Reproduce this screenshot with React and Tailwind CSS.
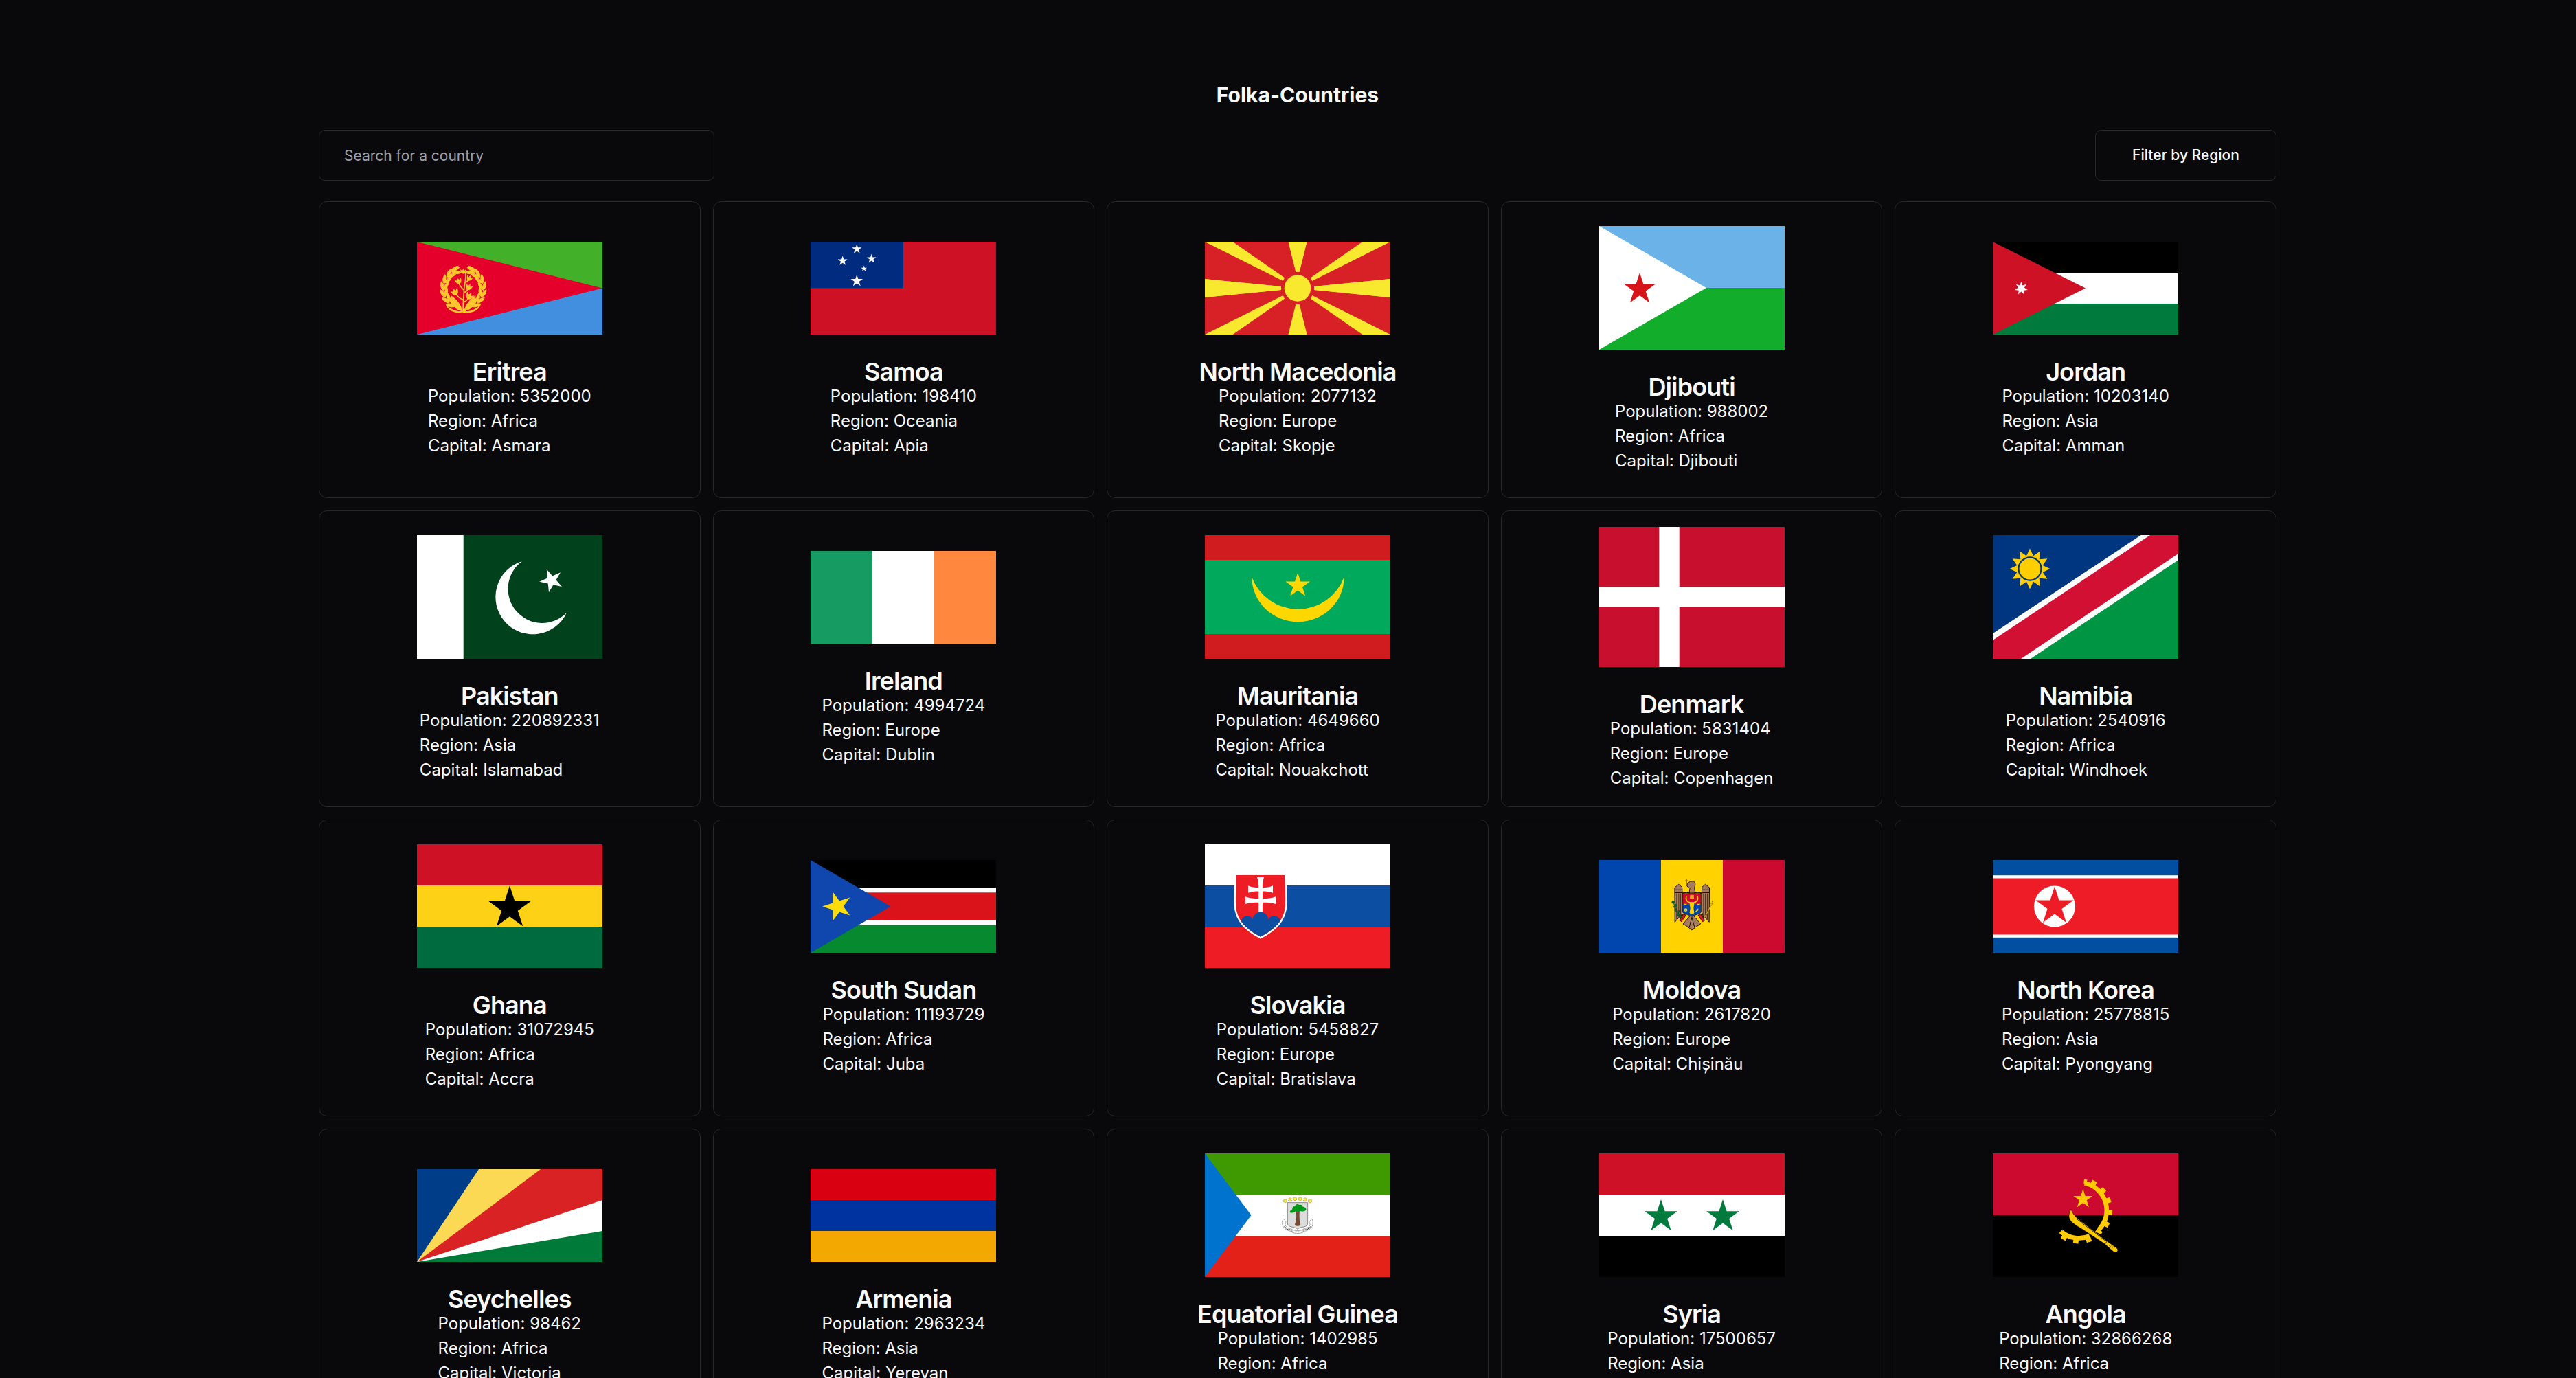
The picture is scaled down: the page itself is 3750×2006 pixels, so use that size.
import React from "react";

const starPoints = (cx, cy, r, rot = 0, n = 5, inner = 0.382) =>
  Array.from({ length: n * 2 }, (_, i) => {
    const a = ((-90 + rot + (i * 180) / n) * Math.PI) / 180;
    const d = i % 2 ? r * inner : r;
    return `${(cx + d * Math.cos(a)).toFixed(2)},${(cy + d * Math.sin(a)).toFixed(2)}`;
  }).join(" ");

const Star = ({ x, y, r, rot, n, inner, fill }) => (
  <polygon points={starPoints(x, y, r, rot, n, inner)} fill={fill} />
);

const Bands = ({ rows }) =>
  rows.map(([y, h, fill], i) => <rect key={i} y={y} width="270" height={h} fill={fill} />);

const Pillars = ({ fills, h }) =>
  fills.map((fill, i) => <rect key={i} x={i * 90} width="90" height={h} fill={fill} />);

const LEAF = "M0 7 C-4.6 3.5 -5 -2.5 -1.2 -7.5 C3.2 -4 4.2 2 0 7 Z";
const SPRIG = "M0 5 C-4 4 -5.5 0 -5.5 -4 L-2 -1.5 L0 -5.5 L2 -1.5 L5.5 -4 C5.5 0 4 4 0 5 Z";

function Eritrea() {
  const angles = [24, 44, 64, 84, 104, 124, 143];
  return (
    <>
      <rect width="270" height="67.5" fill="#43b02a" />
      <rect y="67.5" width="270" height="67.5" fill="#418fde" />
      <path d="M0 0 L270 67.5 L0 135 Z" fill="#e4002b" />
      <g transform="translate(67.4 68)" fill="#ffc72c">
        {[1, -1].map((s) => (
          <g key={s} transform={`scale(${s} 1)`}>
            {angles.map((a) => (
              <g key={a} transform={`rotate(${a}) translate(0 -28.5) rotate(-90)`}>
                <path d={LEAF} transform="translate(2.6 0) rotate(22) scale(.8 1)" />
                <path d={LEAF} transform="translate(-2.6 -1) rotate(-22) scale(.8 1)" />
              </g>
            ))}
            <path d="M5 -31 C9 -33 15 -31 19 -27 C14 -24 8 -26 5 -31 Z" />
            <path d="M1 32 C4 22 10 15 18 10 C18 20 14 29 6 32 Z" />
            <path d="M1 33 C12 34 20 29 26 22 C23 32 12 37 1 35 Z" />
            <path d="M0 31 L7 35 M0 34 L7 30" stroke="#ffc72c" strokeWidth="1.4" fill="none" />
          </g>
        ))}
        <path d="M0 35 C-1 22 1 12 1 3 C1 -6 5 -12 3 -24 M0 16 C-4 15 -9 12 -11 6 M1 2 C-2 0 -5 -4 -7 -9 M1 20 C5 18 7 15 9 13 M1 6 C4 5 6 2 7 0 M3 -9 C6 -10 8 -13 9 -15" stroke="#ffc72c" strokeWidth="1.7" fill="none" />
        <path d={SPRIG} transform="translate(0 -25) scale(.75)" />
        <path d={SPRIG} transform="translate(9 -15) rotate(20) scale(.8)" />
        <path d={SPRIG} transform="translate(-7 -11) rotate(-25) scale(.9)" />
        <path d={SPRIG} transform="translate(8 -2) rotate(25) scale(.9)" />
        <path d={SPRIG} transform="translate(-12 5) rotate(-30)" />
        <path d={SPRIG} transform="translate(9 11) rotate(30) scale(1.05)" />
      </g>
    </>
  );
}

const Samoa = () => (
  <>
    <rect width="270" height="135" fill="#ce1124" />
    <rect width="135" height="67.3" fill="#002b7f" />
    <Star x={67.3} y={10.6} r={7.4} fill="#fff" />
    <Star x={46.7} y={27.8} r={7.4} fill="#fff" />
    <Star x={88.7} y={24.8} r={7.1} fill="#fff" />
    <Star x={77.7} y={39.1} r={4.6} fill="#fff" />
    <Star x={67.3} y={56.9} r={9.2} fill="#fff" />
  </>
);

const NorthMacedonia = () => (
  <>
    <rect width="270" height="135" fill="#d82126" />
    <g fill="#f8e92e">
      {[
        [1, 1],
        [-1, 1],
        [1, -1],
        [-1, -1],
      ].map(([sx, sy]) => (
        <g key={`${sx}${sy}`} transform={`translate(135 67.5) scale(${sx} ${sy})`}>
          <path d="M-135 -67.5 H-94.4 L-19 -15.3 L-21.2 -10.4 Z" />
          <path d="M-13.4 -67.5 H13.4 L2.6 -23.8 H-2.6 Z" />
          <path d="M-135 -13.4 V13.4 L-24 2.5 V-2.5 Z" />
        </g>
      ))}
      <circle cx="135" cy="67.5" r="19.3" />
    </g>
  </>
);

const Djibouti = () => (
  <>
    <Bands rows={[[0, 90, "#6ab2e7"], [90, 90, "#12ad2b"]]} />
    <path d="M0 0 L156 90 L0 180 Z" fill="#fff" />
    <Star x={59} y={92} r={24} fill="#d7141a" />
  </>
);

const Jordan = () => (
  <>
    <Bands rows={[[0, 45, "#000"], [45, 45, "#fff"], [90, 45, "#007a3d"]]} />
    <path d="M0 0 L135 67.5 L0 135 Z" fill="#ce1124" />
    <Star x={41.4} y={67.8} r={9.7} n={7} inner={0.48} fill="#fff" />
  </>
);

const Pakistan = () => (
  <>
    <rect width="270" height="180" fill="#01411c" />
    <rect width="67.7" height="180" fill="#fff" />
    <path d="M153 38 A54.3 54.3 0 1 0 218 112.7 A49.7 49.7 0 1 1 153 38 Z" fill="#fff" />
    <Star x={195.8} y={66} r={17.6} rot={-23.5} fill="#fff" />
  </>
);

const Ireland = () => <Pillars fills={["#169b62", "#fff", "#ff883e"]} h={135} />;

const Mauritania = () => (
  <>
    <Bands rows={[[0, 36, "#d01c1f"], [36, 108, "#00a95c"], [144, 36, "#d01c1f"]]} />
    <path d="M68.3 61 A67.2 65.3 0 0 0 202.7 61 A71.7 71.7 0 0 1 68.3 61 Z" fill="#ffd700" />
    <Star x={135.2} y={73.4} r={18.7} fill="#ffd700" />
  </>
);

const Denmark = () => (
  <>
    <rect width="270" height="204" fill="#c8102e" />
    <rect x="87.3" width="29.4" height="204" fill="#fff" />
    <rect y="87.3" width="270" height="29.4" fill="#fff" />
  </>
);

const Namibia = () => (
  <>
    <rect width="270" height="180" fill="#fff" />
    <path d="M0 0 H215.7 L0 143.3 Z" fill="#003580" />
    <path d="M0 153 L229 0 H270 V27 L41 180 H0 Z" fill="#d21034" />
    <path d="M270 36.3 V180 H55 Z" fill="#009543" />
    <Star x={54} y={49} r={29.4} n={12} inner={0.66} fill="#ffce00" />
    <circle cx="54" cy="49" r="17.7" fill="#003580" />
    <circle cx="54" cy="49" r="15.4" fill="#ffce00" />
  </>
);

const Ghana = () => (
  <>
    <Bands rows={[[0, 60, "#ce1124"], [60, 60, "#fcd116"], [120, 60, "#006b3f"]]} />
    <Star x={135} y={92.8} r={32.6} fill="#000" />
  </>
);

const SouthSudan = () => (
  <>
    <Bands
      rows={[
        [0, 40.2, "#000"],
        [40.2, 54.6, "#fff"],
        [47.3, 40.2, "#da121a"],
        [94.7, 40.3, "#078930"],
      ]}
    />
    <path d="M0 0 L116.6 67.5 L0 135 Z" fill="#0f47af" />
    <Star x={39.3} y={67.5} r={22.2} rot={-90} fill="#fcdd09" />
  </>
);

const Slovakia = () => (
  <>
    <Bands rows={[[0, 60, "#fff"], [60, 60, "#0b4ea2"], [120, 60, "#ee1c25"]]} />
    <path
      id="sk-shield"
      d="M46 45 H116 C117 60 117.3 75 117 88 C116 112 100 124.5 81 134.8 C62 124.5 46 112 45 88 C44.7 75 45 60 46 45 Z"
      fill="#ee1c25"
      stroke="#fff"
      strokeWidth="5.2"
    />
    <clipPath id="sk-clip">
      <path d="M46 45 H116 C117 60 117.3 75 117 88 C116 112 100 124.5 81 134.8 C62 124.5 46 112 45 88 C44.7 75 45 60 46 45 Z" />
    </clipPath>
    <g clipPath="url(#sk-clip)">
      <rect x="40" y="40" width="82" height="100" fill="#ee1c25" />
      <path
        d="M76 48 H86 C84.6 53 84 57 84 63.2 C89 63.2 94 62.5 99 60.3 V70.7 C94 69 89 68.5 84 68.5 V79.3 C91 79.3 97 78.6 103 76.3 V87 C97 85.2 91 84.8 84 84.8 V101 H78.3 V84.8 C71 84.8 65 85.2 59 87 V76.3 C65 78.6 71 79.3 78.3 79.3 V68.5 C73 68.5 68 69 63 70.7 V60.3 C68 62.5 73 63.2 78.3 63.2 C78.3 57 77.6 53 76 48 Z"
        fill="#fff"
      />
      <g fill="#0b4ea2">
        <circle cx="81" cy="110" r="11.3" />
        <circle cx="61.7" cy="113" r="9" />
        <circle cx="100.7" cy="113" r="9" />
        <path d="M50 114 L70.8 110 H92 L113 114 V140 H50 Z" />
      </g>
    </g>
  </>
);

const Moldova = () => (
  <>
    <Pillars fills={["#0046ae", "#ffd200", "#cc092f"]} h={135} />
    <g transform="translate(-28 -22) scale(.33333)" strokeLinejoin="round">
      <g fill="#a77b5b" stroke="#1a120c" strokeWidth="3">
        <path d="M489 300 L474 318 L450 345 L462 352 L474 360 L489 372 L504 360 L516 352 L527 345 L504 318 Z" />
        <path d="M489 316 L478 358 M489 316 L500 358" />
        <path d="M477 210 L480 190 C474 184 466 182 467 176 C470 165 478 159 489 159 C500 158 505 165 503 174 L500 190 L504 210 Z" />
        {[1, -1].map((s) => (
          <g key={s} transform={`translate(489.5 0) scale(${s} 1)`}>
            <path d="M-76 186 L-58 172 L-44 184 L-42 212 L-42 292 L-50 318 L-60 320 L-75 337 Z" />
            <path d="M-76 196 L-42 196 M-76 208 L-40 208" strokeWidth="4" />
            <path d="M-67 212 V325 M-58 212 V318 M-50 212 V312" strokeWidth="2" />
            <path d="M-42 212 C-30 204 -20 206 -10 210" fill="none" strokeWidth="5" />
            <path d="M-32 302 L-50 334" stroke="#1a120c" strokeWidth="15" />
            <path d="M-33 305 L-49 332" stroke="#d4142b" strokeWidth="10" />
          </g>
        ))}
      </g>
      <path d="M459 156 H474 M466 149 V176" stroke="#8a6a10" strokeWidth="3" fill="none" />
      <path d="M449 212 H529 V260 H449 Z" fill="#cc092f" />
      <path d="M449 259 H529 V294 C520 304 500 306 489 313 C478 306 458 304 449 294 Z" fill="#0046ae" />
      <path d="M449 212 H529 V294 C520 304 500 306 489 313 C478 306 458 304 449 294 Z" fill="none" stroke="#1a120c" strokeWidth="2" />
      <path d="M466 222 C458 240 470 252 484 252 M512 222 C520 240 508 252 494 252" stroke="#ffd200" strokeWidth="5" fill="none" />
      <path d="M478 250 H500 L496 276 L499 296 C496 304 482 304 479 296 L482 276 Z" fill="#ffd200" />
      <rect x="482" y="220" width="14" height="14" fill="#e8a31a" stroke="#ffd200" strokeWidth="2" />
      <g fill="#ffd200">
        <path d="M453 257 H468 L461 264 Z M510 257 H526 L518 264 Z" />
        <circle cx="462" cy="284" r="7" />
        <path d="M504 292 C514 292 520 284 516 276 C512 284 506 286 504 292 Z" />
      </g>
      <circle cx="462" cy="284" r="2.4" fill="#0046ae" />
      <path d="M404 246 C412 262 424 290 440 318" stroke="#12602c" strokeWidth="3" fill="none" />
      <g fill="#12602c" stroke="#0c2c16" strokeWidth="1">
        <circle cx="407" cy="250" r="6" />
        <circle cx="419" cy="264" r="6" />
        <circle cx="412" cy="270" r="4" />
        <circle cx="420" cy="284" r="6" />
        <circle cx="432" cy="290" r="5" />
        <circle cx="428" cy="304" r="6" />
        <circle cx="439" cy="313" r="6" />
      </g>
      <path d="M580 246 C572 264 560 290 544 316" stroke="#6e5410" strokeWidth="6" strokeDasharray="6 3" fill="none" />
      <path d="M580 246 C572 264 560 290 544 316" stroke="#f2c21a" strokeWidth="3" fill="none" />
      <path d="M443 342 L458 320 M536 342 L520 320" stroke="#ffd200" strokeWidth="4" />
    </g>
  </>
);

const NorthKorea = () => (
  <>
    <rect width="270" height="135" fill="#024fa2" />
    <rect y="22.2" width="270" height="90.6" fill="#fff" />
    <rect y="26.5" width="270" height="82" fill="#ed1c27" />
    <circle cx="90" cy="67.5" r="30" fill="#fff" />
    <Star x={90} y={67.5} r={28.9} fill="#ed1c27" />
  </>
);

const Seychelles = () => (
  <>
    <rect width="270" height="135" fill="#003d88" />
    <path d="M0 135 L90 0 H270 V135 Z" fill="#fcd955" />
    <path d="M0 135 L180 0 H270 V135 Z" fill="#d92223" />
    <path d="M0 135 L270 45 V135 Z" fill="#fff" />
    <path d="M0 135 L270 90 V135 Z" fill="#007a39" />
  </>
);

const Armenia = () => (
  <Bands rows={[[0, 45, "#d90012"], [45, 45, "#0033a0"], [90, 45, "#f2a800"]]} />
);

const EquatorialGuinea = () => (
  <>
    <Bands rows={[[0, 60, "#3e9a00"], [60, 60, "#fff"], [120, 60, "#e32118"]]} />
    <path d="M0 0 L67.5 90 L0 180 Z" fill="#0073ce" />
    <g transform="translate(-34 -19) scale(.33333)">
      {[
        [453, 265],
        [474, 259],
        [495, 256],
        [518, 256],
        [540, 259],
        [561, 265],
      ].map(([x, y]) => (
        <polygon key={x} points={starPoints(x, y, 9, 0, 6, 0.62)} fill="#ffee33" stroke="#8a8320" strokeWidth="1.4" />
      ))}
      <path d="M463 272 H551 V362 C551 384 520 374 507 388 C494 374 463 384 463 362 Z" fill="#dcdcdc" stroke="#8b8b8b" strokeWidth="3" />
      <path d="M500 308 H515 C513 330 514 352 519 370 C512 375 502 375 495 370 C502 352 503 330 500 308 Z" fill="#7a4a30" stroke="#3b2418" strokeWidth="1" />
      <path d="M472 314 C474 306 482 304 484 300 C482 294 488 288 494 289 C496 280 508 276 514 282 C522 280 530 284 530 290 C540 290 546 298 544 304 C538 312 526 312 518 308 C510 312 502 308 496 311 C490 318 478 318 472 314 Z" fill="#009a1a" />
      <g fill="#fff" stroke="#777" strokeWidth="2">
        <path d="M446 342 L440 352 L441 370 C448 388 464 396 484 398 L483 388 C468 386 458 380 452 370 L456 356 Z" />
        <path d="M568 342 L574 352 L573 370 C566 388 550 396 530 398 L531 388 C546 386 556 380 562 370 L558 356 Z" />
        <path d="M483 390 C492 396 522 396 531 390 V402 C520 408 494 408 483 402 Z" />
      </g>
      <path d="M449 376 C456 386 466 390 481 392 M565 376 C558 386 548 390 533 392 M497 400 H517" stroke="#333" strokeWidth="4" strokeDasharray="3 1.5" fill="none" />
    </g>
  </>
);

const Syria = () => (
  <>
    <Bands rows={[[0, 60, "#ce1126"], [60, 60, "#fff"], [120, 60, "#000"]]} />
    <Star x={90} y={92} r={25} fill="#007a3d" />
    <Star x={180} y={92} r={25} fill="#007a3d" />
  </>
);

const Angola = () => (
  <>
    <Bands rows={[[0, 90, "#cc092f"], [90, 90, "#000"]]} />
    <g transform="translate(-41 -19) scale(.33333)" fill="#ffcb00">
      <path d="M524 187 A121 121 0 0 1 586 390 M546 418 A121 121 0 0 1 423 400" fill="none" stroke="#ffcb00" strokeWidth="20" />
      {[-62, -40, -19, 4, 27, 72, 96, 119].map((a) => (
        <rect key={a} x="126" y="-11.5" width="19" height="23" transform={`translate(500 306) rotate(${a})`} />
      ))}
      <path d="M522 170 L536 172 L531 190 L520 188 Z M413 405 L424 392 L436 401 L424 414 Z" />
      <path d="M580 385 L602 400 L596 412 L570 398 Z" />
      <Star x={517} y={256.5} r={44} fill="#ffcb00" />
      <path d="M465 302 C458 312 455 324 456 334 C457 352 478 366 496 377 C540 404 580 432 612 452 L650 486 C656 492 667 490 669 480 C668 474 664 470 658 466 L622 441 L496 344 C482 332 470 318 465 302 Z" stroke="#000" strokeWidth="1.5" />
      <path d="M490 344 L618 441 M622 440 L612 455" stroke="#000" strokeWidth="2.4" fill="none" />
      <path d="M634 455 L655 469 M631 459 L650 473" stroke="#000" strokeWidth="2.5" strokeDasharray="3 5" fill="none" />
    </g>
  </>
);

const COUNTRIES = [
  { name: "Eritrea", population: 5352000, region: "Africa", capital: "Asmara", Art: Eritrea, h: 135 },
  { name: "Samoa", population: 198410, region: "Oceania", capital: "Apia", Art: Samoa, h: 135 },
  { name: "North Macedonia", population: 2077132, region: "Europe", capital: "Skopje", Art: NorthMacedonia, h: 135 },
  { name: "Djibouti", population: 988002, region: "Africa", capital: "Djibouti", Art: Djibouti, h: 180 },
  { name: "Jordan", population: 10203140, region: "Asia", capital: "Amman", Art: Jordan, h: 135 },
  { name: "Pakistan", population: 220892331, region: "Asia", capital: "Islamabad", Art: Pakistan, h: 180 },
  { name: "Ireland", population: 4994724, region: "Europe", capital: "Dublin", Art: Ireland, h: 135 },
  { name: "Mauritania", population: 4649660, region: "Africa", capital: "Nouakchott", Art: Mauritania, h: 180 },
  { name: "Denmark", population: 5831404, region: "Europe", capital: "Copenhagen", Art: Denmark, h: 204 },
  { name: "Namibia", population: 2540916, region: "Africa", capital: "Windhoek", Art: Namibia, h: 180 },
  { name: "Ghana", population: 31072945, region: "Africa", capital: "Accra", Art: Ghana, h: 180 },
  { name: "South Sudan", population: 11193729, region: "Africa", capital: "Juba", Art: SouthSudan, h: 135 },
  { name: "Slovakia", population: 5458827, region: "Europe", capital: "Bratislava", Art: Slovakia, h: 180 },
  { name: "Moldova", population: 2617820, region: "Europe", capital: "Chișinău", Art: Moldova, h: 135 },
  { name: "North Korea", population: 25778815, region: "Asia", capital: "Pyongyang", Art: NorthKorea, h: 135 },
  { name: "Seychelles", population: 98462, region: "Africa", capital: "Victoria", Art: Seychelles, h: 135 },
  { name: "Armenia", population: 2963234, region: "Asia", capital: "Yerevan", Art: Armenia, h: 135 },
  { name: "Equatorial Guinea", population: 1402985, region: "Africa", capital: "Malabo", Art: EquatorialGuinea, h: 180 },
  { name: "Syria", population: 17500657, region: "Asia", capital: "Damascus", Art: Syria, h: 180 },
  { name: "Angola", population: 32866268, region: "Africa", capital: "Luanda", Art: Angola, h: 180 },
];

function CountryCard({ name, population, region, capital, Art, h }) {
  return (
    <article className="flex h-[432px] flex-col items-center justify-center rounded-xl border border-zinc-800">
      <svg width="270" height={h} viewBox={`0 0 270 ${h}`} className="block shrink-0" role="img" aria-label={name}>
        <Art />
      </svg>
      <h2 className="mt-9 text-4xl leading-none font-semibold tracking-tight">{name}</h2>
      <div className="text-2xl leading-9">
        <p>Population: {population}</p>
        <p>Region: {region}</p>
        <p>Capital: {capital}</p>
      </div>
    </article>
  );
}

export default function App() {
  return (
    <div className="h-[2006px] overflow-hidden bg-[#09090b] pt-[117px] pl-[464px] font-['Inter',sans-serif] text-zinc-50">
      <main className="w-[2850px]">
        <h1 className="mb-[30px] text-center text-3xl leading-[42px] font-bold">Folka-Countries</h1>
        <div className="mb-[30px] flex items-center justify-between">
          <input
            type="text"
            placeholder="Search for a country"
            className="h-[74px] w-[576px] rounded-[9px] border border-zinc-800 bg-transparent px-9 text-[21px] placeholder:text-zinc-400"
          />
          <button className="h-[74px] w-[264px] rounded-[9px] border border-zinc-800 text-[21px] font-medium">
            Filter by Region
          </button>
        </div>
        <section className="grid grid-cols-5 gap-[18px]">
          {COUNTRIES.map((c) => (
            <CountryCard key={c.name} {...c} />
          ))}
        </section>
      </main>
    </div>
  );
}
